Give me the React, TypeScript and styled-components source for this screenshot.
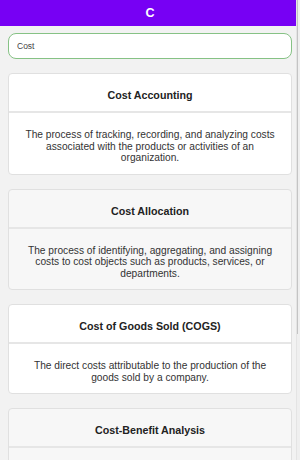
import React from "react";
import styled, { createGlobalStyle } from "styled-components";

const Global = createGlobalStyle`
  html, body { margin: 0; padding: 0; background: #f2f2f2; overflow: hidden; }
  * { box-sizing: border-box; }
  body { font-family: "Liberation Sans", Arial, sans-serif; }
`;

const Frame = styled.div`
  display: flex;
  height: 100vh;
  width: 100%;
`;

const Scroller = styled.div`
  flex: 1;
  overflow-y: auto;
  scrollbar-width: none;
  &::-webkit-scrollbar { display: none; }
`;

const Track = styled.div`
  width: 4px;
  flex: none;
  display: flex;
  flex-direction: column;
  background: #efefef;
  border-left: 1px solid #e4e4e4;
`;

const Thumb = styled.div`
  height: 334px;
  width: 1px;
  background: #c4c4c4;
`;

const Page = styled.div`
  display: flex;
  flex-direction: column;
  background: #f2f2f2;
  padding-bottom: 14px;
`;

const Header = styled.header`
  height: 26px;
  background: #7700f4;
  color: #fff;
  display: flex;
  align-items: center;
  justify-content: center;
  padding-left: 4px;
  font-weight: bold;
  font-size: 12.5px;
`;

const Content = styled.main`
  display: flex;
  flex-direction: column;
  padding: 7px 4px 0 8px;
  gap: 14px;
`;

const Search = styled.input`
  height: 26px;
  width: 100%;
  border: 1px solid #86c285;
  border-radius: 8px;
  background: #fff;
  padding: 0 8px;
  font-family: "Liberation Sans", Arial, sans-serif;
  font-size: 8.5px;
  color: #444;
  outline: none;
`;

const Card = styled.section<{ $alt: boolean }>`
  display: flex;
  flex-direction: column;
  border: 1px solid #e0e0e0;
  border-radius: 4px;
  background: ${(p) => (p.$alt ? "#f7f7f7" : "#ffffff")};
  overflow: hidden;
`;

const Title = styled.h2`
  margin: 0;
  height: 39px;
  padding-top: 5px;
  display: flex;
  align-items: center;
  justify-content: center;
  font-size: 10.7px;
  font-weight: bold;
  color: #222;
  border-bottom: 2px solid #e6e6e6;
`;

const Body = styled.p`
  margin: 0;
  padding: 16px 12px 10px;
  text-align: center;
  font-size: 10.2px;
  line-height: 11.5px;
  color: #333;
`;

const terms = [
  {
    t: "Cost Accounting",
    d: "The process of tracking, recording, and analyzing costs associated with the products or activities of an organization.",
  },
  {
    t: "Cost Allocation",
    d: "The process of identifying, aggregating, and assigning costs to cost objects such as products, services, or departments.",
  },
  {
    t: "Cost of Goods Sold (COGS)",
    d: "The direct costs attributable to the production of the goods sold by a company.",
  },
  {
    t: "Cost-Benefit Analysis",
    d: "A systematic approach to estimating the strengths and weaknesses of alternatives to determine the best option.",
  },
];

export default function App() {
  return (
    <Frame>
      <Global />
      <Scroller>
        <Page>
          <Header>C</Header>
          <Content>
            <Search defaultValue="Cost" />
            {terms.map((x, i) => (
              <Card key={x.t} $alt={i % 2 === 1}>
                <Title>{x.t}</Title>
                <Body>{x.d}</Body>
              </Card>
            ))}
          </Content>
        </Page>
      </Scroller>
      <Track>
        <Thumb />
      </Track>
    </Frame>
  );
}
